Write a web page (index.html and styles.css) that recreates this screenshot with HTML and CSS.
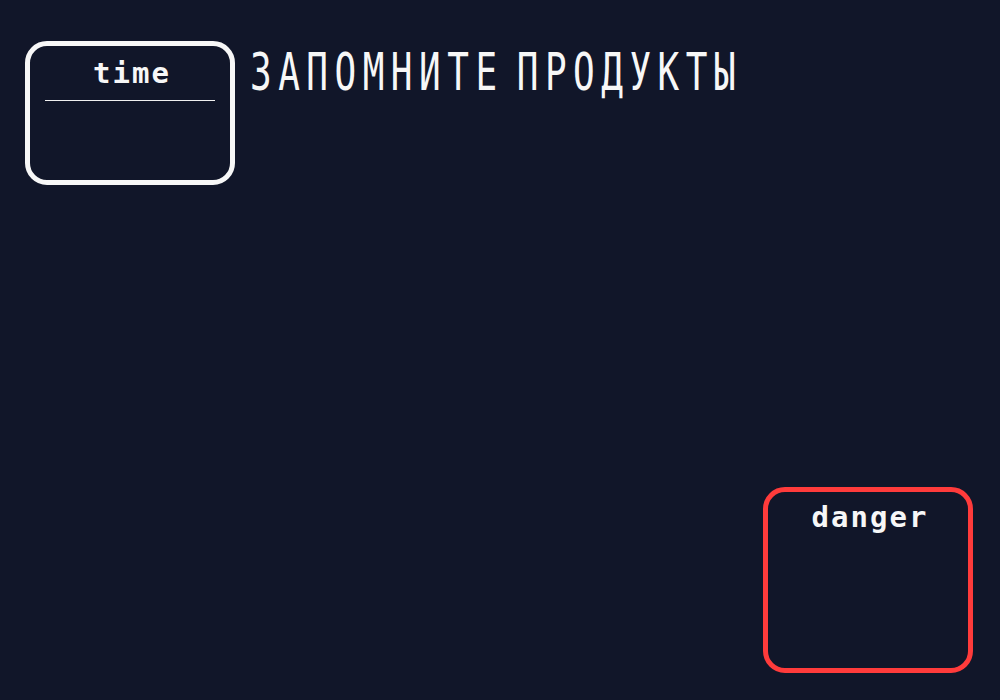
FILE: index.html
```html
<!DOCTYPE html>
<html lang="ru">
<head>
<meta charset="utf-8">
<title>Запомните продукты</title>
<link rel="stylesheet" href="styles.css">
</head>
<body>
<div class="screen">
  <header class="top">
    <section class="panel panel-time">
      <div class="panel-label">time</div>
      <div class="panel-rule"></div>
    </section>
    <h1 class="title"><span class="title-inner">ЗАПОМНИТЕ ПРОДУКТЫ</span></h1>
  </header>
  <section class="panel panel-danger">
    <div class="panel-label">danger</div>
  </section>
</div>
</body>
</html>
```

FILE: styles.css
```css
html, body {
  margin: 0;
  padding: 0;
  background: #111629;
  color: #f5f5f5;
}

.screen {
  box-sizing: border-box;
  width: 1000px;
  height: 700px;
  padding: 41px 27px 27px 25px;
  display: flex;
  flex-direction: column;
}

.top {
  display: flex;
  align-items: flex-start;
  gap: 15px;
}

.panel {
  box-sizing: border-box;
  width: 210px;
  border-radius: 22px;
  display: flex;
  flex-direction: column;
  align-items: center;
}

.panel-time {
  height: 144px;
  border: 5px solid #f7f7f7;
  padding: 10px 15px 0;
}

.panel-danger {
  height: 186px;
  border: 5px solid #ff3b3b;
  padding: 8px 15px 0;
  margin-top: auto;
  align-self: flex-end;
}

.panel-label {
  font-family: "DejaVu Sans Mono", monospace;
  font-weight: bold;
  font-size: 29px;
  line-height: 34px;
  letter-spacing: 2px;
  padding-left: 4px;
  color: #f7f7f7;
}

.panel-rule {
  align-self: stretch;
  height: 1px;
  background: #f0f0f0;
  margin-top: 10px;
}

.title {
  margin: 0;
  padding-top: 11px;
  font-family: "DejaVu Sans Mono", monospace;
  font-weight: normal;
  font-size: 36px;
  line-height: 28px;
  letter-spacing: 6.5px;
  word-spacing: -15px;
  color: #f7f7f7;
  white-space: nowrap;
}

.title-inner {
  display: inline-block;
  transform: scaleY(1.45);
  transform-origin: left top;
}
```
